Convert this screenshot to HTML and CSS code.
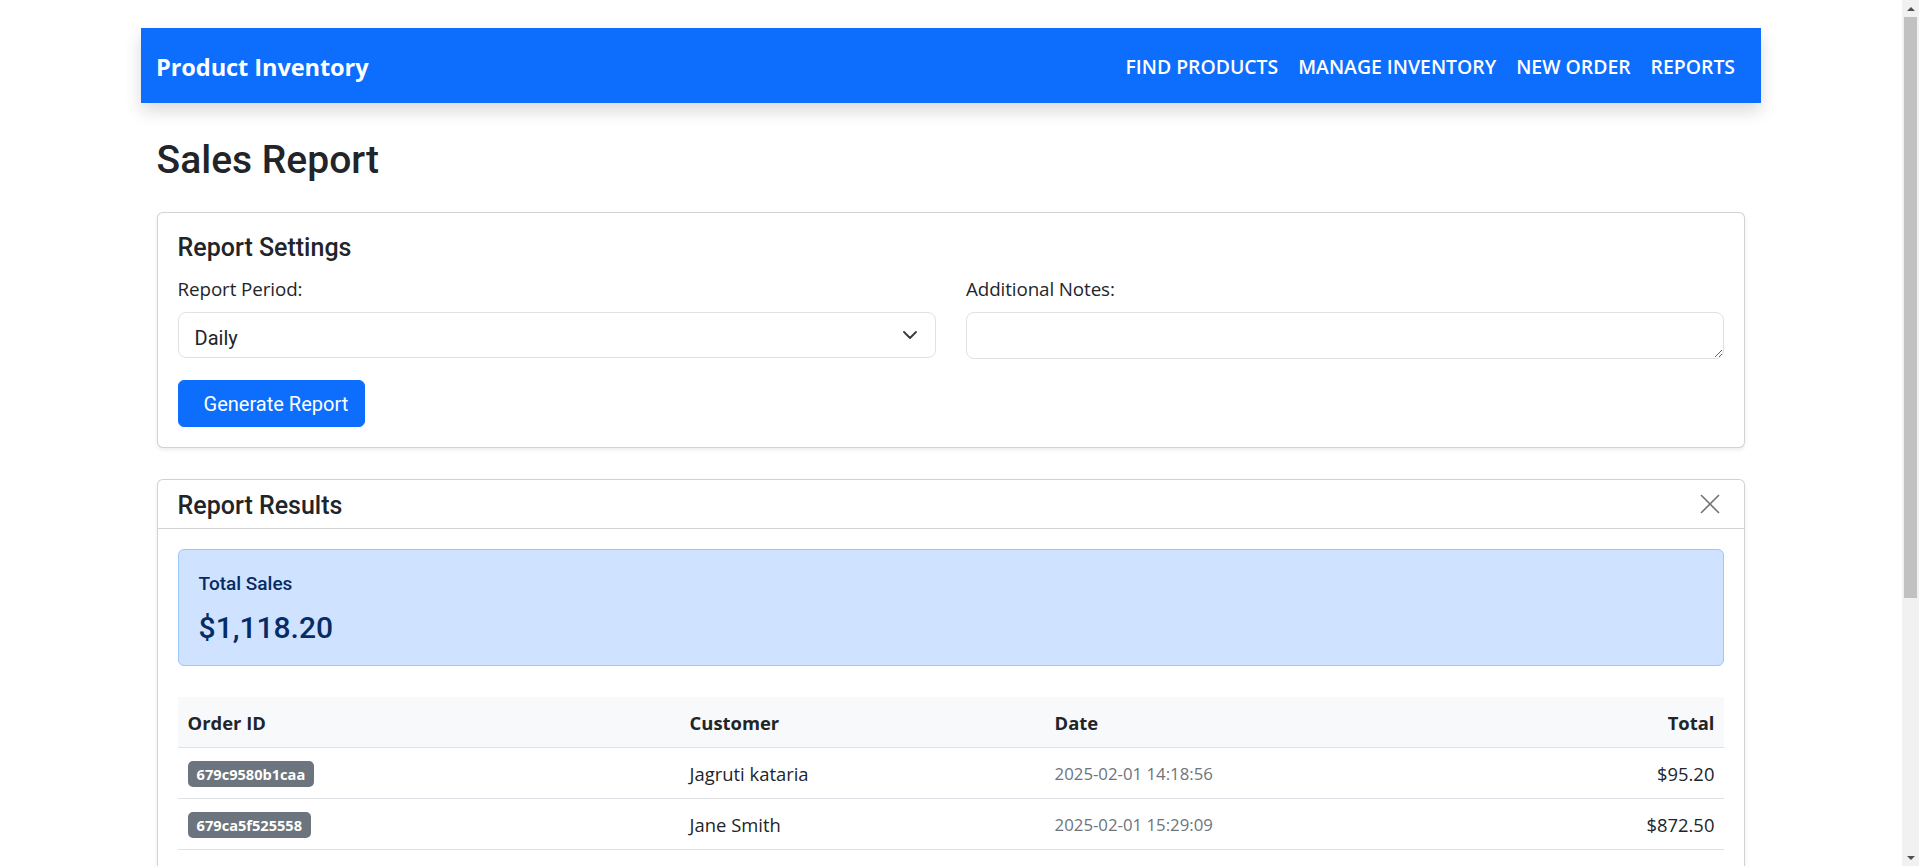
FILE: index.html
```html
<!DOCTYPE html>
<html lang="en">
<head>
<meta charset="utf-8">
<title>Product Inventory - Sales Report</title>
<link rel="stylesheet" href="styles.css">
</head>
<body>
<div class="page">
  <nav class="navbar">
    <a class="brand" href="#">Product Inventory</a>
    <ul class="nav-links">
      <li><a href="#">Find Products</a></li>
      <li><a href="#">Manage Inventory</a></li>
      <li><a href="#">New Order</a></li>
      <li><a href="#">Reports</a></li>
    </ul>
  </nav>

  <main class="main">
    <h1 class="page-title">Sales Report</h1>

    <section class="card settings-card">
      <h4 class="card-title">Report Settings</h4>
      <div class="form-row">
        <div class="form-col">
          <label class="form-label" for="period">Report Period:</label>
          <div class="select-wrap">
            <select id="period" class="form-select">
              <option>Daily</option>
              <option>Weekly</option>
              <option>Monthly</option>
            </select>
            <svg class="chevron" width="14" height="8" viewBox="0 0 14 8"><path d="M1 1 L7 7 L13 1" fill="none" stroke="#343a40" stroke-width="1.8" stroke-linecap="round" stroke-linejoin="round"/></svg>
          </div>
        </div>
        <div class="form-col">
          <label class="form-label" for="notes">Additional Notes:</label>
          <textarea id="notes" class="form-textarea"></textarea>
        </div>
      </div>
      <button class="btn-primary" type="button">Generate Report</button>
    </section>

    <section class="card results-card">
      <div class="card-header">
        <h4 class="card-title">Report Results</h4>
        <button class="btn-close" type="button" aria-label="Close">
          <svg width="20" height="20" viewBox="0 0 20 20"><path d="M1 1 L19 19 M19 1 L1 19" stroke="#000" stroke-opacity="0.55" stroke-width="1.6" fill="none"/></svg>
        </button>
      </div>
      <div class="card-body">
        <div class="alert">
          <h6 class="alert-label">Total Sales</h6>
          <h2 class="alert-value">$1,118.20</h2>
        </div>
        <table class="table">
          <thead>
            <tr>
              <th class="col-id">Order ID</th>
              <th class="col-customer">Customer</th>
              <th class="col-date">Date</th>
              <th class="col-total">Total</th>
            </tr>
          </thead>
          <tbody>
            <tr>
              <td><span class="badge">679c9580b1caa</span></td>
              <td>Jagruti kataria</td>
              <td class="muted">2025-02-01 14:18:56</td>
              <td class="col-total">$95.20</td>
            </tr>
            <tr>
              <td><span class="badge">679ca5f525558</span></td>
              <td>Jane Smith</td>
              <td class="muted">2025-02-01 15:29:09</td>
              <td class="col-total">$872.50</td>
            </tr>
          </tbody>
        </table>
      </div>
    </section>
  </main>
</div>

<div class="scrollbar" aria-hidden="true">
  <div class="sb-arrow sb-up"></div>
  <div class="sb-track"><div class="sb-thumb"></div></div>
  <div class="sb-arrow sb-down"></div>
</div>
</body>
</html>
```

FILE: styles.css
```css
* { box-sizing: border-box; }

body {
  margin: 0;
  padding-right: 17px;
  font-family: Roboto, "Noto Sans", "Liberation Sans", sans-serif;
  font-size: 16px;
  line-height: 1.5;
  color: #212529;
  background: #fff;
}

.page {
  width: 1620px;
  margin: 0 auto;
  padding-top: 28px;
  padding-bottom: 370px;
}

/* Navbar */
.navbar {
  height: 75px;
  background: #0d6efd;
  display: flex;
  align-items: center;
  justify-content: space-between;
  padding: 0 16px 0 15px;
  box-shadow: 0 8px 16px rgba(0, 0, 0, 0.15);
}

.brand {
  margin-top: 3px;
  color: #fff;
  text-decoration: none;
  font-family: "Open Sans", Roboto, sans-serif;
  font-size: 23.6px;
  font-weight: 700;
  line-height: 1.2;
  letter-spacing: -0.1px;
}

.nav-links {
  list-style: none;
  margin: 2px 0 0;
  padding: 0;
  display: flex;
}

.nav-links a {
  display: block;
  padding: 0 10px;
  color: #fff;
  text-decoration: none;
  text-transform: uppercase;
  font-family: "Open Sans", Roboto, sans-serif;
  font-size: 19.4px;
  font-weight: 600;
}

/* Main */
.main {
  padding: 0 15.6px;
}

.page-title {
  margin: 34px 0 28px;
  font-size: 39px;
  font-weight: 500;
  line-height: 1.2;
}

.card {
  border: 1px solid rgba(0, 0, 0, 0.175);
  border-radius: 6px;
  background: #fff;
  box-shadow: 0 2px 4px rgba(0, 0, 0, 0.075);
}

.settings-card {
  padding: 21px 20px 20px;
}

.card-title {
  margin: 0;
  font-size: 25px;
  font-weight: 500;
  line-height: 28.8px;
}

.settings-card .card-title {
  margin-bottom: 14.5px;
}

.form-row {
  display: grid;
  grid-template-columns: 1fr 1fr;
  column-gap: 30px;
}

.form-label {
  display: block;
  font-family: "Open Sans", Roboto, sans-serif;
  font-size: 18.8px;
  line-height: 24px;
  margin-bottom: 11px;
  letter-spacing: -0.1px;
}

.select-wrap {
  position: relative;
}

.form-select {
  display: block;
  width: 100%;
  height: 46px;
  padding: 5px 48px 0 16px;
  font-family: inherit;
  font-size: 20px;
  color: #212529;
  background: #fff;
  border: 1px solid #dee2e6;
  border-radius: 8px;
  appearance: none;
  -webkit-appearance: none;
  outline: none;
}

.chevron {
  position: absolute;
  right: 19px;
  top: 19px;
  pointer-events: none;
}

.form-textarea {
  display: block;
  width: 100%;
  height: 47px;
  padding: 8px 16px;
  font-family: inherit;
  font-size: 16px;
  border: 1px solid #dee2e6;
  border-radius: 8px;
  resize: vertical;
  outline: none;
}

.btn-primary {
  margin-top: 21px;
  height: 46.5px;
  padding: 1px 16px 0 25px;
  font-family: inherit;
  font-size: 20px;
  color: #fff;
  background: #0d6efd;
  border: 1px solid #0d6efd;
  border-radius: 6px;
  cursor: pointer;
}

/* Results */
.results-card {
  margin-top: 31px;
}

.card-header {
  display: flex;
  align-items: center;
  justify-content: space-between;
  padding: 12px 24px 8px 20px;
  border-bottom: 1px solid rgba(0, 0, 0, 0.175);
}

.btn-close {
  display: block;
  width: 20px;
  height: 20px;
  padding: 0;
  border: 0;
  background: transparent;
  cursor: pointer;
  margin-top: -3px;
}

.btn-close svg { display: block; }

.card-body {
  padding: 20px;
}

.alert {
  background: #cfe2ff;
  border: 1px solid #9ec5fe;
  border-radius: 6px;
  color: #052c65;
  padding: 23px 20px 18px;
  margin-bottom: 31px;
}

.alert-label {
  margin: 0 0 14px;
  font-size: 19px;
  font-weight: 500;
  line-height: 21.6px;
}

.alert-value {
  margin: 0;
  font-size: 30px;
  font-weight: 500;
  line-height: 38.4px;
}

.table {
  width: 100%;
  border-collapse: collapse;
  font-family: "Open Sans", Roboto, sans-serif;
  font-size: 18.4px;
  line-height: 27px;
}

.table th,
.table td {
  padding: 11.5px 10px;
  border-bottom: 1px solid #dee2e6;
  text-align: left;
  vertical-align: middle;
}

.table th {
  background: #f8f9fa;
  font-weight: 700;
}

.col-id { width: 502px; }
.col-customer { width: 365px; }
.col-date { width: 380px; }
.table .col-total { text-align: right; }

.muted {
  color: #6c757d;
  font-size: 16.8px;
}

.badge {
  display: inline-block;
  margin-top: 1.5px;
  padding: 5.7px 9px;
  font-size: 14.6px;
  font-weight: 700;
  line-height: 14px;
  color: #fff;
  background: #6c757d;
  border-radius: 5px;
  vertical-align: top;
}

/* Window scrollbar (as in the captured browser) */
.scrollbar {
  position: fixed;
  top: 0;
  right: 0;
  width: 17px;
  height: 100vh;
  background: #f1f1f1;
  display: flex;
  flex-direction: column;
}

.sb-arrow {
  height: 17px;
  flex: none;
  display: flex;
  align-items: center;
  justify-content: center;
}

.sb-up::before,
.sb-down::before {
  content: "";
  width: 0;
  height: 0;
  border-left: 4px solid transparent;
  border-right: 4px solid transparent;
}

.sb-up::before { border-bottom: 4px solid #505050; }
.sb-down::before { border-top: 4px solid #505050; }

.sb-track {
  flex: 1;
}

.sb-thumb {
  height: 581px;
  margin: 0 2px;
  background: #c1c1c1;
}
```
